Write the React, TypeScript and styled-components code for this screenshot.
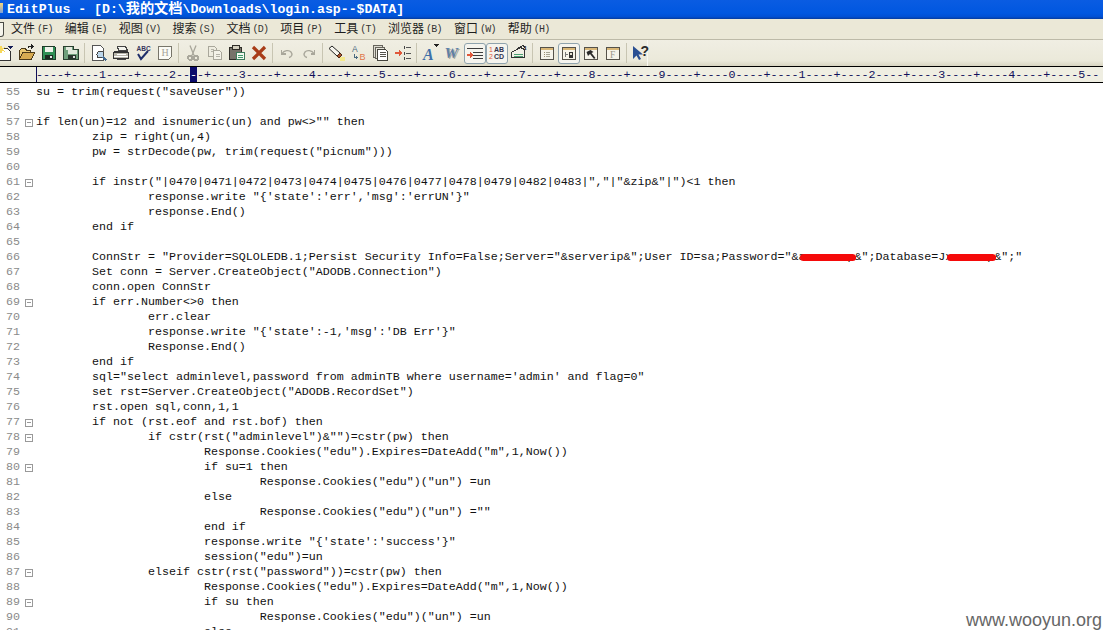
import React from 'react';
import styled, { createGlobalStyle } from 'styled-components';

const GlobalStyle = createGlobalStyle`
  html, body {
    margin: 0;
    padding: 0;
    background: #ffffff;
  }
`;

type CodeLine = { text: string; fold?: boolean; secret?: boolean };

const CODE: CodeLine[] = [
  { text: 'su = trim(request("saveUser"))' },
  { text: '' },
  { text: 'if len(un)=12 and isnumeric(un) and pw<>"" then', fold: true },
  { text: '\tzip = right(un,4)' },
  { text: '\tpw = strDecode(pw, trim(request("picnum")))' },
  { text: '' },
  { text: '\tif instr("|0470|0471|0472|0473|0474|0475|0476|0477|0478|0479|0482|0483|","|"&zip&"|")<1 then', fold: true },
  { text: '\t\tresponse.write "{\'state\':\'err\',\'msg\':\'errUN\'}"' },
  { text: '\t\tresponse.End()' },
  { text: '\tend if' },
  { text: '' },
  { text: '\tConnStr = "Provider=SQLOLEDB.1;Persist Security Info=False;Server="&serverip&";User ID=sa;Password="&axxxxxxp&";Database=Jxxxxxxp&";"', secret: true },
  { text: '\tSet conn = Server.CreateObject("ADODB.Connection")' },
  { text: '\tconn.open ConnStr' },
  { text: '\tif err.Number<>0 then', fold: true },
  { text: '\t\terr.clear' },
  { text: '\t\tresponse.write "{\'state\':-1,\'msg\':\'DB Err\'}"' },
  { text: '\t\tResponse.End()' },
  { text: '\tend if' },
  { text: '\tsql="select adminlevel,password from adminTB where username=\'admin\' and flag=0"' },
  { text: '\tset rst=Server.CreateObject("ADODB.RecordSet")' },
  { text: '\trst.open sql,conn,1,1' },
  { text: '\tif not (rst.eof and rst.bof) then', fold: true },
  { text: '\t\tif cstr(rst("adminlevel")&"")=cstr(pw) then', fold: true },
  { text: '\t\t\tResponse.Cookies("edu").Expires=DateAdd("m",1,Now())' },
  { text: '\t\t\tif su=1 then', fold: true },
  { text: '\t\t\t\tResponse.Cookies("edu")("un") =un' },
  { text: '\t\t\telse' },
  { text: '\t\t\t\tResponse.Cookies("edu")("un") =""' },
  { text: '\t\t\tend if' },
  { text: '\t\t\tresponse.write "{\'state\':\'success\'}"' },
  { text: '\t\t\tsession("edu")=un' },
  { text: '\t\telseif cstr(rst("password"))=cstr(pw) then', fold: true },
  { text: '\t\t\tResponse.Cookies("edu").Expires=DateAdd("m",1,Now())' },
  { text: '\t\t\tif su then', fold: true },
  { text: '\t\t\t\tResponse.Cookies("edu")("un") =un' },
  { text: '\t\t\telse' },
];

const MENUS = [
  ['文件', '(F)'],
  ['编辑', '(E)'],
  ['视图', '(V)'],
  ['搜索', '(S)'],
  ['文档', '(D)'],
  ['项目', '(P)'],
  ['工具', '(T)'],
  ['浏览器', '(B)'],
  ['窗口', '(W)'],
  ['帮助', '(H)'],
];

const RULER_BEFORE = '----+----1----+----2--';
const RULER_AFTER = '-+----3----+----4----+----5----+----6----+----7----+----8----+----9----+----0----+----1----+----2----+----3----+----4----+----5---'.slice(0, 129);

const INK = '#2b2b2b';

const Svg: React.FC<{ children: React.ReactNode }> = ({ children }) => (
  <svg width="18" height="18" viewBox="0 0 18 18" fill="none" shapeRendering="crispEdges">
    {children}
  </svg>
);

const WindowFrame: React.FC<{ children?: React.ReactNode }> = ({ children }) => (
  <>
    <rect x="2.5" y="3.5" width="13" height="12" fill="#f6f4ea" stroke="#55524a" />
    <rect x="3" y="4" width="12" height="2" fill="#d9b777" />
    {children}
  </>
);

const ICONS: Record<string, React.ReactNode> = {
  new: (
    <Svg>
      <path d="M3.5 4.5h8l3 3v9h-11z" fill="#fff" stroke="#333" />
      <path d="M5 1l1.3 3L9.5 3 7.5 5.5 9.5 8 6.3 7 5 10 3.7 7 .5 8l2-2.5L.5 3l3.2 1z" fill="#f7d85a" />
      <path d="M12 2h5l-2.500 3z" fill="#111a55" />
    </Svg>
  ),
  open: (
    <Svg>
      <path d="M1.500 15.500v-9l2-2h4l1 2h4v2" fill="#e9c873" stroke="#4b3a1a" />
      <path d="M1.500 15.500l3-7h12l-3 7z" fill="#d7ab52" stroke="#4b3a1a" />
      <path d="M10 4c1-2 3-2.500 5-1.500M13 .5l2.500 2-2.500 2" stroke="#222" />
    </Svg>
  ),
  save: (
    <Svg>
      <path d="M2.500 2.500h12l1 1v12h-13z" fill="#2f8f55" stroke="#1e3a2a" />
      <rect x="5" y="3" width="8" height="5" fill="#eef2ea" />
      <rect x="5" y="11" width="8" height="4" fill="#1c2a22" />
      <rect x="10" y="12" width="2" height="2" fill="#e8e8e8" />
    </Svg>
  ),
  saveAll: (
    <Svg>
      <path d="M1.500 2.500h10v3h5v10h-15z" fill="#6f9f7b" stroke="#2a3f30" />
      <rect x="4" y="3" width="6" height="3" fill="#e4eadf" />
      <rect x="6" y="6" width="9" height="4" fill="#dfe8da" />
      <rect x="6" y="11" width="8" height="4" fill="#27352c" />
      <rect x="11" y="12" width="2" height="2" fill="#ddd" />
    </Svg>
  ),
  preview: (
    <Svg>
      <path d="M2.500 1.500h8l3 3v12h-11z" fill="#fff" stroke="#555" />
      <circle cx="10.500" cy="10.500" r="3.500" fill="#bcd6ea" stroke="#444" />
      <path d="M13 13l3.500 3.500" stroke="#446a90" strokeWidth="2" />
    </Svg>
  ),
  print: (
    <Svg>
      <path d="M5.500 2.500h8l2 4h-9z" fill="#f4f4ee" stroke="#444" />
      <path d="M1.500 8.500h15v6h-15z" fill="#b9b7ab" stroke="#333" />
      <path d="M2 7.500h14" stroke="#333" />
      <path d="M4.500 10.500h9M2 12.500h14" stroke="#fff" />
      <path d="M4.500 15.500h9" stroke="#444" />
    </Svg>
  ),
  spell: (
    <Svg>
      <text x="2.500" y="7" fontFamily="Liberation Sans, sans-serif" fontSize="6.500" fontWeight="700" fill="#34345c">ABC</text>
      <path d="M4 10l3 5 7-8" stroke="#1f2f6a" strokeWidth="2" shapeRendering="auto" />
    </Svg>
  ),
  pageH: (
    <Svg>
      <path d="M2.500 2.500h13v10l-3 3h-10z" fill="#fbfbf6" stroke="#77756a" />
      <text x="5.500" y="11.500" fontFamily="Liberation Serif, serif" fontSize="10" fill="#a5a39a">H</text>
    </Svg>
  ),
  cut: (
    <Svg>
      <path d="M6 1.500l4 10M12 1.500l-4 10" stroke="#a9a79b" strokeWidth="1.300" shapeRendering="auto" />
      <circle cx="6" cy="14" r="2.300" stroke="#a9a79b" strokeWidth="1.300" />
      <circle cx="12" cy="14" r="2.300" stroke="#a9a79b" strokeWidth="1.300" />
    </Svg>
  ),
  copy: (
    <Svg>
      <path d="M2.500 2.500h6l2 2v8h-8z" fill="#eeece0" stroke="#a9a79b" />
      <path d="M7.500 6.500h6l2 2v7h-8z" fill="#f4f2e8" stroke="#a9a79b" />
      <path d="M9.500 10.500h4M9.500 12.500h4M4.500 5.500h3M4.500 7.500h2" stroke="#b5b3a8" />
    </Svg>
  ),
  paste: (
    <Svg>
      <path d="M1.500 3.500h12v12h-12z" fill="#77736a" stroke="#2f2d28" />
      <rect x="4" y="1" width="7" height="4" fill="#d4d0c0" stroke="#2f2d28" />
      <path d="M8.500 8.500h8v7h-8z" fill="#f3f8f0" stroke="#3d7a5a" />
      <path d="M10 11.500h5M10 13.500h5" stroke="#3d9a6a" />
    </Svg>
  ),
  del: (
    <Svg>
      <path d="M3 3l12 12M15 3L3 15" stroke="#a83c18" strokeWidth="3.200" shapeRendering="auto" />
    </Svg>
  ),
  undo: (
    <Svg>
      <path d="M3.500 6v4h4" stroke="#a9a79b" strokeWidth="1.300" />
      <path d="M4 9.500C6 6.500 11 5.500 13 8s.5 5-2 5.500" stroke="#a9a79b" strokeWidth="1.300" shapeRendering="auto" />
    </Svg>
  ),
  redo: (
    <Svg>
      <path d="M14.500 6v4h-4" stroke="#a9a79b" strokeWidth="1.300" />
      <path d="M14 9.500C12 6.500 7 5.500 5 8s-.5 5 2 5.500" stroke="#a9a79b" strokeWidth="1.300" shapeRendering="auto" />
    </Svg>
  ),
  highlight: (
    <Svg>
      <path d="M1 4.500l3-2.500 8 7-3 3z" fill="#f6f5ee" stroke="#222" shapeRendering="auto" />
      <path d="M9 12l3-3 2 2-3 3z" fill="#a8532f" stroke="#4d2a1a" shapeRendering="auto" />
      <rect x="12" y="13" width="5" height="4" fill="#f4e98c" />
    </Svg>
  ),
  replace: (
    <Svg>
      <text x="2" y="8" fontFamily="Liberation Sans, sans-serif" fontSize="8.500" fill="#4a6a80">A</text>
      <path d="M4.500 9.500v4h3M6 12l1.500 1.500L6 15" stroke="#4a6a80" />
      <text x="9.500" y="16" fontFamily="Liberation Sans, sans-serif" fontSize="9" fill="#e0764a">B</text>
    </Svg>
  ),
  docs: (
    <Svg>
      <path d="M1.500 1.500h9v3h-7v9h-2z" fill="#dcdad0" stroke="#66645c" />
      <path d="M3.500 3.500h9v2h-7v9h-2z" fill="#e8e6dc" stroke="#66645c" />
      <path d="M5.500 5.500h8l2 2v9h-10z" fill="#fff" stroke="#44433c" />
      <path d="M7.500 8.500h6M7.500 10.500h6M7.500 12.500h6" stroke="#55534c" />
    </Svg>
  ),
  listArrow: (
    <Svg>
      <path d="M1 9h6" stroke="#e0583a" strokeWidth="2" />
      <path d="M5 6l3 3-3 3z" fill="#e0583a" />
      <path d="M10 2v3M10 7.500v3M10 13v3" stroke="#444" />
      <path d="M12 3.500h5M12 9h5M12 14.500h5" stroke="#555" />
    </Svg>
  ),
  fontA: (
    <Svg>
      <text x="1" y="16" fontFamily="Liberation Serif, serif" fontStyle="italic" fontWeight="700" fontSize="16" fill="#3f6fa8">A</text>
      <path d="M12 0h5.500l-2.800 3z" fill="#222" />
    </Svg>
  ),
  fontW: (
    <Svg>
      <text x="1.800" y="14.800" fontFamily="Liberation Serif, serif" fontStyle="italic" fontWeight="700" fontSize="15" fill="#a8a69c">W</text>
      <text x="0.500" y="14" fontFamily="Liberation Serif, serif" fontStyle="italic" fontWeight="700" fontSize="15" fill="#5d7fa8">W</text>
    </Svg>
  ),
  indent: (
    <Svg>
      <path d="M1 4.500h16M7 8.500h10M7 11.500h10M7 14.500h10" stroke="#3d3d3d" />
      <path d="M1 11h4" stroke="#e0583a" strokeWidth="2" />
      <path d="M4 8l3 3-3 3z" fill="#e0583a" />
    </Svg>
  ),
  lineNumbers: (
    <Svg>
      <text x="1" y="8" fontFamily="Liberation Sans, sans-serif" fontSize="7" fill="#e0583a">1</text>
      <text x="6" y="8" fontFamily="Liberation Sans, sans-serif" fontSize="7" fontWeight="700" fill="#33334f">AB</text>
      <text x="1" y="15" fontFamily="Liberation Sans, sans-serif" fontSize="7" fill="#e0583a">2</text>
      <text x="6" y="15" fontFamily="Liberation Sans, sans-serif" fontSize="7" fontWeight="700" fill="#33334f">CD</text>
    </Svg>
  ),
  wrapTag: (
    <Svg>
      <path d="M1.500 8.500l9-5 4 2v8h-13z" fill="#f2f0e6" stroke="#333" />
      <path d="M3.500 10.500h9M3.500 12.500h9" stroke="#4aa070" />
      <path d="M6 5.500l7-4 2 2" stroke="#333" />
      <text x="13.500" y="6" fontFamily="Liberation Serif, serif" fontSize="7" fontWeight="700" fill="#222">1</text>
    </Svg>
  ),
  panelList: (
    <Svg>
      <WindowFrame>
        <path d="M6 8.500h1M6 10.500h1M6 12.500h1" stroke="#9a8f70" />
        <path d="M8 8.500h4M8 10.500h4M8 12.500h4" stroke="#a8a694" />
      </WindowFrame>
    </Svg>
  ),
  panelTree: (
    <Svg>
      <WindowFrame>
        <path d="M5.500 8v5M5.500 10.500h2" stroke="#777" />
        <rect x="9" y="8" width="4" height="6" fill="#333" />
        <rect x="10" y="9" width="2" height="1.500" fill="#e6e3d4" />
      </WindowFrame>
    </Svg>
  ),
  panelTool: (
    <Svg>
      <WindowFrame>
        <path d="M4.500 8l4-2 3 2-2 1 4 5-1.500 1-4-5-2 2z" fill="#2a2a2a" shapeRendering="auto" />
      </WindowFrame>
    </Svg>
  ),
  panelF: (
    <Svg>
      <WindowFrame>
        <text x="6" y="14" fontFamily="Liberation Serif, serif" fontSize="9.500" fill="#9a988c">F</text>
      </WindowFrame>
    </Svg>
  ),
  help: (
    <Svg>
      <path d="M1 2v13l3.500-3.500L7 16l2-1-2.500-4.500H11z" fill="#2a4f92" shapeRendering="auto" />
      <text x="8.500" y="11.500" fontFamily="Liberation Sans, sans-serif" fontSize="14" fontWeight="700" fill={INK}>?</text>
    </Svg>
  ),
};

const TOOL_GROUPS: string[][] = [
  ['new', 'open', 'save', 'saveAll'],
  ['preview', 'print', 'spell', 'pageH'],
  ['cut', 'copy', 'paste', 'del'],
  ['undo', 'redo'],
  ['highlight', 'replace', 'docs', 'listArrow'],
  ['fontA', 'fontW', 'indent', 'lineNumbers', 'wrapTag'],
  ['panelList', 'panelTree', 'panelTool', 'panelF'],
  ['help'],
];

const ACTIVE_TOOLS = ['indent', 'lineNumbers', 'panelTree'];

export default function App() {
  return (
    <Page>
      <GlobalStyle />
      <TitleBar>
        <TitleIcon />
        <TitleText>
          EditPlus - [D:\<TitleCjk>我的文档</TitleCjk>\Downloads\login.asp--$DATA]
        </TitleText>
      </TitleBar>
      <MenuBar>
        <MenuHandle />
        {MENUS.map(([label, key]) => (
          <MenuItem key={label}>
            {label}
            <MenuKey>{key}</MenuKey>
          </MenuItem>
        ))}
      </MenuBar>
      <Toolbar>
        <ToolRow>
          {TOOL_GROUPS.map((group, i) => (
            <React.Fragment key={group[0]}>
              {i > 0 && <ToolSep />}
              {group.map((name) => (
                <ToolButton key={name} $active={ACTIVE_TOOLS.includes(name)}>
                  {ICONS[name]}
                </ToolButton>
              ))}
            </React.Fragment>
          ))}
        </ToolRow>
      </Toolbar>
      <Ruler>
        <RulerGutter />
        <RulerText>
          {RULER_BEFORE}
          <RulerCaret>-</RulerCaret>
          {RULER_AFTER}
        </RulerText>
      </Ruler>
      <Editor>
        {CODE.map((line, i) => (
          <Row key={i}>
            <LineNo>{55 + i}</LineNo>
            <FoldCell>{line.fold && <FoldBox />}</FoldCell>
            <Code>{line.text}</Code>
            {line.secret && (
              <>
                <Scribble $left={800} $width={56} />
                <Scribble $left={947} $width={49} />
              </>
            )}
          </Row>
        ))}
        <Watermark>www.wooyun.org</Watermark>
      </Editor>
    </Page>
  );
}

const Page = styled.div`
  width: 1103px;
  height: 630px;
  overflow: hidden;
  background: #fff;
`;

const TitleBar = styled.div`
  height: 19px;
  box-sizing: border-box;
  padding-bottom: 3px;
  display: flex;
  align-items: center;
  background: linear-gradient(#0a5ce2, #0057e0 70%, #0050d4 88%, #063c9e);
`;

const TitleIcon = styled.div`
  width: 3px;
  height: 10px;
  margin-right: 4px;
  background: linear-gradient(#f3d77a, #7fa0d8);
`;

const TitleText = styled.div`
  font: bold 13.2px/15px "Liberation Mono", "Noto Sans CJK SC", monospace;
  color: #fff;
  white-space: pre;
`;

const TitleCjk = styled.span`
  display: inline-block;
  font: bold 14.2px/14px "Noto Sans CJK SC", sans-serif;
`;

const MenuBar = styled.div`
  height: 20px;
  display: flex;
  align-items: center;
  gap: 12px;
  background: #ebe8d7;
`;

const MenuHandle = styled.div`
  width: 3px;
  height: 13px;
  margin-right: -5px;
  background: #f6f5ec;
  border: 1px solid #4a4a44;
  border-left: none;
  border-radius: 0 0 3px 0;
`;

const MenuItem = styled.div`
  font: 12px/16px "Noto Sans CJK SC", sans-serif;
  color: #1d1d1d;
  white-space: pre;
`;

const MenuKey = styled.span`
  font: 10px/16px "Liberation Mono", monospace;
  letter-spacing: -0.72px;
  color: #333;
  margin-left: 2px;
  vertical-align: 1px;
`;

const Toolbar = styled.div`
  height: 26px;
  overflow: hidden;
  border-top: 1px solid #bdbaa8;
  background: linear-gradient(#f0eee3, #ebe9da 80%, #d8d5c2);
`;

const ToolRow = styled.div`
  width: 652px;
  height: 26px;
  margin-left: -6px;
  padding-right: 1px;
  display: flex;
  align-items: center;
  border-right: 1px solid #f8f7f0;
  box-sizing: content-box;
`;

const ToolButton = styled.div<{ $active: boolean }>`
  width: 22px;
  height: 21px;
  flex: none;
  display: flex;
  align-items: center;
  justify-content: center;
  box-sizing: border-box;
  border-radius: 3px;
  border: ${(p) => (p.$active ? '1px solid #8fa3ad' : '1px solid transparent')};
  background: ${(p) => (p.$active ? '#f5f4ee' : 'transparent')};
`;

const ToolSep = styled.div`
  width: 1px;
  height: 20px;
  flex: none;
  margin: 0 3px 0 2px;
  background: #c8c5b2;
`;

const Ruler = styled.div`
  height: 15px;
  display: flex;
  border-top: 1px solid #000;
  border-bottom: 1px solid #000;
  background: #efeee2;
`;

const RulerGutter = styled.div`
  width: 36px;
  flex: none;
`;

const RulerText = styled.div`
  font: 11.67px/16px "Liberation Mono", monospace;
  color: #10105a;
  white-space: pre;
  overflow: hidden;
  box-shadow: inset 1px 0 0 #10105a;
`;

const RulerCaret = styled.span`
  display: inline-block;
  background: #0a0a6a;
  color: #fff;
`;

const Editor = styled.div`
  position: relative;
  padding-top: 2px;
`;

const Row = styled.div`
  height: 15px;
  display: flex;
  align-items: center;
`;

const LineNo = styled.div`
  width: 20px;
  text-align: right;
  font: 11.67px/15px "Liberation Mono", monospace;
  color: #8a8a8a;
`;

const FoldCell = styled.div`
  width: 16px;
  padding-left: 5px;
  box-sizing: border-box;
  display: flex;
`;

const FoldBox = styled.div`
  width: 8px;
  height: 8px;
  box-sizing: border-box;
  border: 1px solid #999;
  background: linear-gradient(#999, #999) center / 4px 1px no-repeat;
`;

const Code = styled.pre`
  margin: 0;
  font: 11.67px/15px "Liberation Mono", monospace;
  color: #111;
  tab-size: 8;
`;

const Scribble = styled.div<{ $left: number; $width: number }>`
  position: absolute;
  left: ${(p) => p.$left}px;
  width: ${(p) => p.$width}px;
  height: 7px;
  border-radius: 4px;
  background: #f50a0a;
`;

const Watermark = styled.div`
  position: absolute;
  top: 526px;
  right: 1px;
  font: 18px/22px "Liberation Sans", sans-serif;
  color: #666;
  background: #fff;
`;
